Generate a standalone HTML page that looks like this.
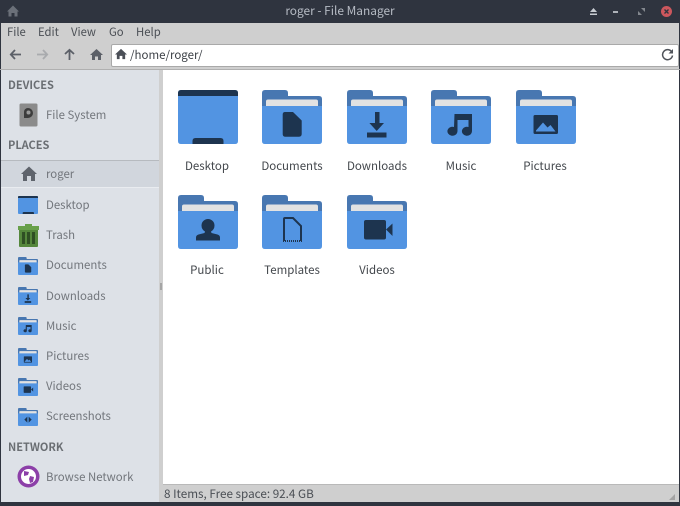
<!DOCTYPE html>
<html><head><meta charset="utf-8">
<style>
html,body{margin:0;padding:0;width:680px;height:506px;overflow:hidden;background:#2f343f}
body{position:relative;font-family:"Noto Sans CJK JP","Liberation Sans",sans-serif;font-size:11.5px;color:#3f4349}
div,span,svg{position:absolute}
.t{white-space:nowrap;line-height:16px;height:16px}
.m{top:24px;color:#4b4f55;font-size:11.3px}
.h{left:8px;font-weight:bold;color:#6a6e73;font-size:11px}
.s{left:46px;color:#72767c;font-size:11.4px}
.l{width:84px;text-align:center;color:#43474c;font-size:11.5px}
.f{width:60px;height:54px}
.i{width:20px;height:18px;left:18px}
</style></head><body>
<svg width="0" height="0" style="position:absolute">
<defs>
<g id="fb"><path d="M0 3q0-3 3-3h20q3 0 3 3v3h31q3 0 3 3v42H0z" fill="#4877b1"/><rect x="4" y="9.500" width="52" height="12" rx="2" fill="#e2e2e2"/><path d="M0 16h60v35q0 3-3 3H3q-3 0-3-3z" fill="#5294e2"/></g>
<g id="doc"><use href="#fb"/><path d="M23 22h8l8.700 8.500V44q0 2.700-2.700 2.700H23q-2.300 0-2.300-2.700V24.500q0-2.500 2.300-2.500z" fill="#1d344f"/></g>
<g id="dl"><use href="#fb"/><path d="M28 22h4.500v11H37l-7.300 8-7.300-8H28zM20 42.500h19.500V47.500H20z" fill="#1d344f"/></g>
<g id="mu"><use href="#fb"/><path d="M23.500 24H41v17.500h-.1a5 4.500 0 1 1-3.400-4.500V30h-11v11.500h-.1a5 4.500 0 1 1-3.400-4.500z" fill="#1d344f"/></g>
<g id="pi"><use href="#fb"/><path fill-rule="evenodd" d="M19 25h21.500q1.500 0 1.500 1.500v16q0 1.500-1.500 1.500H19q-1.500 0-1.500-1.500v-16q0-1.500 1.500-1.500zM20 41.500h19.500L34.500 35l-3 2.500-4.500-5-7 8z" fill="#1d344f"/></g>
<g id="pu"><use href="#fb"/><path d="M30 24a6.500 6.500 0 0 1 6.500 6.500q0 4-3.500 6l.5 1.500 6 1.500q2.500.8 2.500 3v3H18v-3q0-2.200 2.500-3l6-1.500.5-1.500q-3.500-2-3.500-6A6.500 6.500 0 0 1 30 24z" fill="#1d344f"/></g>
<g id="te"><use href="#fb"/><path d="M22 46V24q0-1 1-1h8l8 8v15" fill="none" stroke="#1d344f" stroke-width="2"/><path d="M21 46h19" stroke="#1d344f" stroke-width="2" stroke-dasharray="1 1" fill="none"/></g>
<g id="vi"><use href="#fb"/><rect x="17" y="25" width="22" height="19.500" rx="2" fill="#1d344f"/><path d="M39 34.500l6.500-6v12.500z" fill="#1d344f"/></g>
<g id="sc"><use href="#fb"/><path d="M28 26v18l-9-9zM32 26v18l9-9z" fill="#1d344f"/></g>
</defs></svg>

<!-- titlebar -->
<div style="left:0;top:0;width:680px;height:23px;background:#2f343f"></div>
<svg style="left:6px;top:4px" width="14" height="14" viewBox="0 0 14 14"><path d="M7 1.500L13 7.500H11.500V12.500H8.500V9H5.500V12.500H2.500V7.500H1z" fill="#6b7079"/></svg>
<div class="t" style="left:0;top:3px;width:680px;text-align:center;color:#b6bbc4;font-size:11.9px">roger - File Manager</div>
<svg style="left:589px;top:7px" width="9" height="9" viewBox="0 0 9 9"><path d="M4.500 1L8 5H1zM1 6.500h7V8H1z" fill="#c8ccd2"/></svg>
<div style="left:613px;top:11px;width:5px;height:1.500px;background:#aeb2b9"></div>
<svg style="left:638px;top:8px" width="7" height="7" viewBox="0 0 7 7"><path d="M3 0H7V4zM4 7H0V3z" fill="#83878e"/></svg>
<div style="left:661px;top:6px;width:11px;height:11px;border-radius:50%;background:#cc575d"></div>
<svg style="left:663px;top:8px" width="7" height="7" viewBox="0 0 7 7"><path d="M1.500 1.500l4 4M5.500 1.500l-4 4" stroke="#2f343f" stroke-width="1.400"/></svg>

<!-- menubar + toolbar -->
<div style="left:1px;top:23px;width:678px;height:46px;background:#cfcfcf"></div>
<div class="t m" style="left:7px">File</div>
<div class="t m" style="left:38px">Edit</div>
<div class="t m" style="left:71px">View</div>
<div class="t m" style="left:109px">Go</div>
<div class="t m" style="left:136px">Help</div>

<svg style="left:9px;top:48px" width="13" height="13" viewBox="0 0 13 13"><path d="M6 2L1.800 6.500 6 11M2 6.500H12" fill="none" stroke="#5c6068" stroke-width="1.800"/></svg>
<svg style="left:36px;top:48px" width="13" height="13" viewBox="0 0 13 13"><path d="M7 2l4.200 4.500L7 11M11 6.500H1" fill="none" stroke="#a9abae" stroke-width="1.800"/></svg>
<svg style="left:63px;top:48px" width="13" height="13" viewBox="0 0 13 13"><path d="M2 6l4.500-4.200L11 6M6.500 2V12" fill="none" stroke="#5c6068" stroke-width="1.800"/></svg>
<svg style="left:90px;top:48px" width="13" height="13" viewBox="0 0 13 13"><path d="M6.500 1L13 7H11V12H8V8.500H5V12H2V7H0z" fill="#5c6068"/></svg>

<div style="left:111px;top:44px;width:566px;height:21px;background:#fff;border:1px solid #a9a9a9;border-radius:2px"></div>
<svg style="left:115px;top:48px" width="12" height="12" viewBox="0 0 13 13"><path d="M6.500 1L13 7H11V12H8V8.500H5V12H2V7H0z" fill="#4b4f57"/></svg>
<div class="t" style="left:130px;top:47px;color:#3c4046;font-size:11.5px">/home/roger/</div>
<svg style="left:661px;top:48px" width="13" height="13" viewBox="0 0 13 13"><path d="M10.800 4A5 5 0 1 0 11.500 7.500" fill="none" stroke="#4f535a" stroke-width="1.500"/><path d="M12 1v4.500H7.500z" fill="#4f535a"/></svg>

<!-- main -->
<div style="left:0;top:69px;width:680px;height:1px;background:#b0b0b0"></div>
<div style="left:1px;top:70px;width:158px;height:432px;background:#dde1e7"></div>
<div style="left:159px;top:70px;width:4px;height:432px;background:#cfcfcf"></div>
<div style="left:160px;top:283px;width:2px;height:7px;background:#a5a5a5"></div>
<div style="left:163px;top:70px;width:516px;height:415px;background:#fff"></div>
<div style="left:163px;top:484px;width:516px;height:18px;background:#cfcfcf;border-top:1px solid #b9b9b9;box-sizing:border-box"></div>
<div style="left:159px;top:485px;width:520px;height:17px;background:#cfcfcf"></div>
<div class="t" style="left:164px;top:486px;color:#4b4f55;font-size:11.7px">8 Items, Free space: 92.4 GB</div>
<svg style="left:668px;top:493px" width="8" height="8" viewBox="0 0 8 8"><path d="M7 1V7H1z" fill="#a3a3a3"/></svg>

<!-- sidebar -->
<div class="t h" style="top:77px">DEVICES</div>
<div class="t h" style="top:137px">PLACES</div>
<div class="t h" style="top:439px">NETWORK</div>
<div style="left:1px;top:160px;width:158px;height:28px;background:#d1d6dd;border-top:1.500px solid #b6babf;border-bottom:1px solid #e9ecf0;box-sizing:border-box"></div>

<svg style="left:19px;top:103px" width="20" height="24" viewBox="0 0 20 24"><rect x=".5" y=".5" width="18" height="23" rx="1.500" fill="#8b8b8b"/><path d="M9 5a5 5 0 1 1 0 10H5V9a4 4 0 0 1 4-4z" fill="#3c3c3c"/><circle cx="9.500" cy="9.500" r="2" fill="#9a9a9a"/></svg>
<div class="t s" style="top:107px">File System</div>

<svg style="left:21px;top:166px" width="16" height="16" viewBox="0 0 16 16"><path d="M8 .5L16 8H14V15H10V10H6V15H2V8H0z" fill="#5f646c"/></svg>
<div class="t s" style="top:166px">roger</div>

<svg class="i" style="top:196px" viewBox="0 0 60 54"><path d="M0 3q0-3 3-3h54q3 0 3 3v48q0 3-3 3H3q-3 0-3-3z" fill="#5294e2"/><path d="M0 6V3q0-3 3-3h54q3 0 3 3v3z" fill="#1d344f"/><path d="M14 54v-3q0-3 3-3h28q3 0 3 3v3z" fill="#1d344f"/></svg>
<div class="t s" style="top:197px">Desktop</div>

<svg style="left:18px;top:224px" width="21" height="23" viewBox="0 0 21 23"><rect x="1" y="4" width="19" height="19" rx="1" fill="#55873c"/><rect x="0" y="2" width="21" height="4" fill="#68a04a"/><rect x="7" y="0" width="7" height="3" fill="#68a04a"/><rect x="4" y="8" width="3" height="12" fill="#2f4f24"/><rect x="9" y="8" width="3" height="12" fill="#2f4f24"/><rect x="14" y="8" width="3" height="12" fill="#2f4f24"/></svg>
<div class="t s" style="top:227px">Trash</div>

<svg class="i" style="top:257px" viewBox="0 0 60 54"><use href="#doc"/></svg>
<div class="t s" style="top:257px">Documents</div>
<svg class="i" style="top:287px" viewBox="0 0 60 54"><use href="#dl"/></svg>
<div class="t s" style="top:288px">Downloads</div>
<svg class="i" style="top:317px" viewBox="0 0 60 54"><use href="#mu"/></svg>
<div class="t s" style="top:318px">Music</div>
<svg class="i" style="top:348px" viewBox="0 0 60 54"><use href="#pi"/></svg>
<div class="t s" style="top:348px">Pictures</div>
<svg class="i" style="top:378px" viewBox="0 0 60 54"><use href="#vi"/></svg>
<div class="t s" style="top:378px">Videos</div>
<svg class="i" style="top:408px" viewBox="0 0 60 54"><use href="#sc"/></svg>
<div class="t s" style="top:408px">Screenshots</div>

<svg style="left:17px;top:465px" width="23" height="23" viewBox="0 0 23 23"><circle cx="11.500" cy="11.500" r="11" fill="#8c3fa8"/><circle cx="11.500" cy="11.500" r="7.500" fill="#fff"/><path d="M7 6l5 1-1 3-4 1zM13 11l4 1-1 5-3 1-1-4z" fill="#8c3fa8"/></svg>
<div class="t s" style="top:469px">Browse Network</div>

<!-- content row 1 -->
<svg class="f" style="left:178px;top:90px" viewBox="0 0 60 54"><path d="M0 3q0-3 3-3h54q3 0 3 3v48q0 3-3 3H3q-3 0-3-3z" fill="#5294e2"/><path d="M0 6V3q0-3 3-3h54q3 0 3 3v3z" fill="#1d344f"/><path d="M14.500 54v-3q0-3 3-3h25q3 0 3 3v3z" fill="#1d344f"/></svg>
<svg class="f" style="left:262px;top:90px" viewBox="0 0 60 54"><use href="#doc"/></svg>
<svg class="f" style="left:347px;top:90px" viewBox="0 0 60 54"><use href="#dl"/></svg>
<svg class="f" style="left:431px;top:90px" viewBox="0 0 60 54"><use href="#mu"/></svg>
<svg class="f" style="left:516px;top:90px" viewBox="0 0 60 54"><use href="#pi"/></svg>
<div class="t l" style="left:165px;top:158px">Desktop</div>
<div class="t l" style="left:250px;top:158px">Documents</div>
<div class="t l" style="left:335px;top:158px">Downloads</div>
<div class="t l" style="left:419px;top:158px">Music</div>
<div class="t l" style="left:503px;top:158px">Pictures</div>

<!-- content row 2 -->
<svg class="f" style="left:178px;top:195px" viewBox="0 0 60 54"><use href="#pu"/></svg>
<svg class="f" style="left:262px;top:195px" viewBox="0 0 60 54"><use href="#te"/></svg>
<svg class="f" style="left:347px;top:195px" viewBox="0 0 60 54"><use href="#vi"/></svg>
<div class="t l" style="left:165px;top:262px">Public</div>
<div class="t l" style="left:250px;top:262px">Templates</div>
<div class="t l" style="left:335px;top:262px">Videos</div>

<div style="left:0;top:502px;width:680px;height:4px;background:#2f343f"></div>
</body></html>
